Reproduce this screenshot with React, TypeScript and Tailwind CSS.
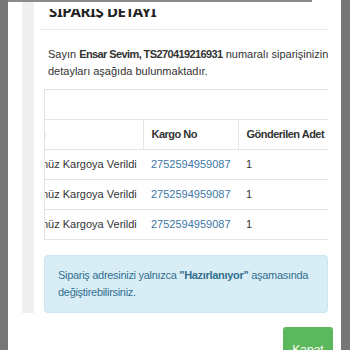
const rows = [1, 2, 3];

const App = () => {
  return (
    <div
      className="w-[350px] h-[350px] bg-[#777777] overflow-hidden flex text-[#333333]"
      style={{ fontFamily: '"Liberation Sans", Arial, sans-serif' }}
    >
      <div className="w-[8px] shrink-0" />
      <div className="w-[333px] shrink-0 bg-white flex flex-col relative">
        <div className="absolute top-0 left-0 w-[304px] h-[2px] bg-[#8a8a8a]" />
        <div className="flex h-[323px]">
          <div className="w-[14px] shrink-0" />
          <div className="w-[12px] shrink-0 bg-[#efefef]" />
          <div className="flex-1 min-w-0 flex flex-col pl-[10px] pr-[13px]">
            {/* başlık (üstü kesik) */}
            <div className="h-[9px] mt-[9px] overflow-hidden pl-[5px]">
              <div
                className="text-[15px] font-bold leading-none -mt-[5px] tracking-tight text-[#222]"
                style={{ fontFamily: '"Noto Sans", sans-serif' }}
              >
                SİPARİŞ DETAYI
              </div>
            </div>
            <div className="mt-[11px] -ml-[4px] h-px bg-[#e8e8e8]" />
            <p className="mt-[16px] pl-[4px] -mr-[3px] text-[11px] leading-[17px]">
              Sayın <b className="tracking-[-0.6px]">Ensar Sevim, TS270419216931</b> numaralı siparişinizin
              detayları aşağıda bulunmaktadır.
            </p>
            <div className="mt-[9px] border-t border-l border-[#e4e4e4] overflow-hidden">
              <div className="h-[29px]" />
              <table className="-ml-[41px] w-[420px] table-fixed text-[11px] border-collapse whitespace-nowrap">
                <thead>
                  <tr className="h-[30px] border-t border-b border-[#e4e4e4] tracking-[-0.5px]">
                    <th className="text-left font-bold px-[8px] w-[139px]">Durum</th>
                    <th className="text-left font-bold px-[8px] w-[95px] border-l border-[#e4e4e4]">Kargo No</th>
                    <th className="text-left font-bold px-[8px] border-l border-[#e4e4e4]">Gönderilen Adet</th>
                  </tr>
                </thead>
                <tbody>
                  {rows.map(r => (
                    <tr key={r} className="h-[30px] border-b border-[#e4e4e4]">
                      <td className="px-[8px]">Ürününüz Kargoya Verildi</td>
                      <td className="px-[8px] text-[#3b76a6]">2752594959087</td>
                      <td className="px-[8px]">1</td>
                    </tr>
                  ))}
                </tbody>
              </table>
            </div>
            <div className="mt-[15px] h-[58px] rounded-[4px] bg-[#d9edf7] border border-[#c8e5f0] px-[13px] py-[11px] text-[11px] leading-[17px] tracking-[-0.3px] text-[#31708f]">
              Sipariş adresinizi yalnızca <b>"Hazırlanıyor"</b> aşamasında değiştirebilirsiniz.
            </div>
          </div>
        </div>
        <div className="mt-[4px] ml-[7px] h-px bg-[#eeeeee]" />
        <div className="flex justify-end pr-[8px] pt-[10px]">
          <button className="w-[50px] h-[26px] rounded-[3px] bg-[#5cb85c] text-white text-[12px] pt-[14px]">
            Kapat
          </button>
        </div>
      </div>
      <div className="flex-1" />
    </div>
  );
};

export default App;
